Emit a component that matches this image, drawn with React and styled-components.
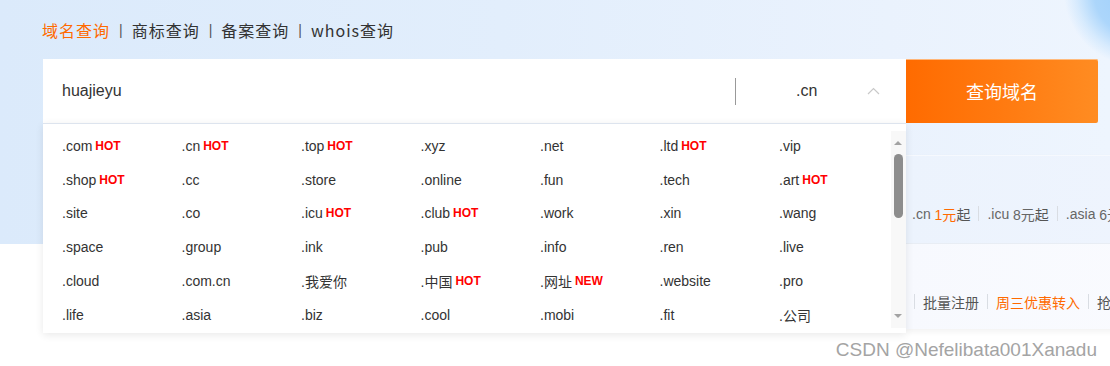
import React from "react";
import styled, { createGlobalStyle } from "styled-components";

const GlobalStyle = createGlobalStyle`
  html, body {
    margin: 0;
    padding: 0;
    overflow: hidden;
    background: #fff;
  }
  body {
    font-family: "Liberation Sans", Arial, "Noto Sans CJK SC", sans-serif;
  }
`;

const Page = styled.div`
  position: relative;
  width: 1110px;
  height: 366px;
  overflow: hidden;
  padding: 19px 0 0 43px;
  box-sizing: border-box;
  background-image:
    radial-gradient(circle at 1138px -8px, #9ccefa 0, #acd6fb 44px, rgba(200, 228, 253, 0.6) 62px, rgba(230, 241, 253, 0) 74px),
    linear-gradient(143deg, rgba(255, 255, 255, 0) 0, rgba(255, 255, 255, 0) 1010px, rgba(255, 255, 255, 0.7) 1013px, rgba(255, 255, 255, 0) 1016px),
    linear-gradient(90deg, #dbeafb 0%, #e2eefc 45%, #eaf2fd 80%, #eef5fe 100%);
  background-size: 100% 244px;
  background-repeat: no-repeat;
`;

const Tabs = styled.div`
  display: flex;
  align-items: center;
  height: 22px;
  margin: 0 0 18px -1px;
  font-family: "Noto Sans CJK SC", "Liberation Sans", sans-serif;
  font-size: 16px;
  line-height: 22px;
  letter-spacing: 1px;
  color: #333;
`;

const Tab = styled.span`
  color: ${(p) => (p.$active ? "#ff6a00" : "#333")};
  cursor: pointer;
`;

const TabSep = styled.span`
  font-family: "Liberation Sans", sans-serif;
  font-size: 14px;
  color: #555;
  margin: 0 9px;
  letter-spacing: 0;
`;

const SearchRow = styled.div`
  display: flex;
  height: 64px;
`;

const SearchWrap = styled.div`
  position: relative;
  width: 863px;
  z-index: 2;
`;

const SearchBox = styled.div`
  display: flex;
  align-items: center;
  height: 64px;
  background: #fff;
`;

const Input = styled.input`
  flex: 1;
  height: 100%;
  border: none;
  outline: none;
  padding: 0 0 0 19px;
  background: transparent;
  font-family: "Liberation Sans", Arial, sans-serif;
  font-size: 16px;
  color: #333;
`;

const Divider = styled.div`
  width: 1px;
  height: 27px;
  background: #999;
`;

const Selector = styled.div`
  width: 170px;
  box-sizing: border-box;
  display: flex;
  align-items: center;
  justify-content: space-between;
  padding: 0 26px 0 60px;
  font-size: 16px;
  color: #333;
`;

const SearchButton = styled.button`
  width: 192px;
  height: 64px;
  border: none;
  border-radius: 0 2px 2px 0;
  background: linear-gradient(90deg, #ff6b00 0%, #ff7a10 50%, #ff8c22 100%);
  box-shadow: inset 0 1px 0 rgba(255, 200, 150, 0.8);
  color: #fff;
  font-family: "Noto Sans CJK SC", sans-serif;
  font-size: 18px;
  cursor: pointer;
`;

const Dropdown = styled.div`
  position: absolute;
  top: 100%;
  left: 0;
  width: 863px;
  height: 210px;
  box-sizing: border-box;
  background: #fff;
  border-top: 1px solid #dde4ee;
  box-shadow: 0 2px 8px rgba(0, 0, 0, 0.09);
  overflow: hidden;
`;

const DomainGrid = styled.div`
  display: grid;
  grid-template-columns: repeat(7, 119.5px);
  grid-auto-rows: 33.8px;
  padding: 5px 0 0 19px;
`;

const Domain = styled.div`
  display: flex;
  align-items: center;
  font-size: 14px;
  color: #333;
  white-space: nowrap;
`;

const Tag = styled.span`
  margin-left: 3px;
  font-size: 12px;
  font-weight: bold;
  color: #f00;
`;

const ScrollTrack = styled.div`
  position: absolute;
  top: 7px;
  right: 0;
  width: 15px;
  height: 197px;
  background: #f8f8f8;
`;

const ScrollArrow = styled.div`
  position: absolute;
  left: 3px;
  width: 0;
  height: 0;
  border-left: 4px solid transparent;
  border-right: 4px solid transparent;
  ${(p) =>
    p.$down
      ? "bottom: 10px; border-top: 4px solid #a3a3a3;"
      : "top: 10px; border-bottom: 4px solid #a3a3a3;"}
`;

const ScrollThumb = styled.div`
  position: absolute;
  top: 23px;
  left: 3px;
  width: 9px;
  height: 64px;
  border-radius: 5px;
  background: #8d8d8d;
`;

const Panel = styled.div`
  margin: 32px 0 0 863px;
  width: 420px;
  box-shadow: 0 3px 6px rgba(0, 0, 0, 0.05);
`;

const Card = styled.div`
  display: flex;
  align-items: center;
  height: ${(p) => p.$h}px;
  box-sizing: border-box;
  padding: ${(p) => p.$pt}px 0 0 ${(p) => p.$pl}px;
  background: ${(p) => p.$bg};
  border-top: 1px solid ${(p) => p.$line};
  font-family: "Liberation Sans", Arial, "Noto Sans CJK SC", sans-serif;
  font-size: 14px;
  color: #666;
  white-space: nowrap;
`;

const Price = styled.span`
  color: ${(p) => (p.$hot ? "#ff6a00" : "#666")};
`;

const CardLink = styled.span`
  font-family: "Noto Sans CJK SC", sans-serif;
  color: ${(p) => (p.$hot ? "#ff6a00" : "#555")};
`;

const Sep = styled.span`
  display: inline-block;
  width: 1px;
  height: 15px;
  margin: 0 8px;
  background: #d9dde3;
`;

const Watermark = styled.div`
  position: absolute;
  right: 13px;
  bottom: 5px;
  font-family: "Liberation Sans", Arial, sans-serif;
  font-size: 19px;
  line-height: 22px;
  color: #a4a4a4;
  text-shadow: 0 0 1px rgba(255, 255, 255, 0.8);
`;

const domains = [
  [".com", "HOT"], [".cn", "HOT"], [".top", "HOT"], [".xyz"], [".net"], [".ltd", "HOT"], [".vip"],
  [".shop", "HOT"], [".cc"], [".store"], [".online"], [".fun"], [".tech"], [".art", "HOT"],
  [".site"], [".co"], [".icu", "HOT"], [".club", "HOT"], [".work"], [".xin"], [".wang"],
  [".space"], [".group"], [".ink"], [".pub"], [".info"], [".ren"], [".live"],
  [".cloud"], [".com.cn"], [".我爱你"], [".中国", "HOT"], [".网址", "NEW"], [".website"], [".pro"],
  [".life"], [".asia"], [".biz"], [".cool"], [".mobi"], [".fit"], [".公司"],
];

const ChevronUp = () => (
  <svg width="13" height="8" viewBox="0 0 13 8">
    <polyline points="1,7 6.5,1.5 12,7" fill="none" stroke="#c9c9c9" strokeWidth="1.2" />
  </svg>
);

const App = () => {
  return (
    <Page>
      <GlobalStyle />
      <Tabs>
        <Tab $active>域名查询</Tab>
        <TabSep>|</TabSep>
        <Tab>商标查询</Tab>
        <TabSep>|</TabSep>
        <Tab>备案查询</Tab>
        <TabSep>|</TabSep>
        <Tab>whois查询</Tab>
      </Tabs>
      <SearchRow>
        <SearchWrap>
          <SearchBox>
            <Input defaultValue="huajieyu" />
            <Divider />
            <Selector>
              <span>.cn</span>
              <ChevronUp />
            </Selector>
          </SearchBox>
          <Dropdown>
            <DomainGrid>
              {domains.map(([name, tag]) => (
                <Domain key={name}>
                  {name}
                  {tag && <Tag>{tag}</Tag>}
                </Domain>
              ))}
            </DomainGrid>
            <ScrollTrack>
              <ScrollArrow />
              <ScrollThumb />
              <ScrollArrow $down />
            </ScrollTrack>
          </Dropdown>
        </SearchWrap>
        <SearchButton>查询域名</SearchButton>
      </SearchRow>
      <Panel>
        <Card $h={88} $pt={28} $pl={6} $bg="linear-gradient(90deg, #ecf3fd, #f0f5fe)" $line="#f6f9fe">
          .cn&nbsp;<Price $hot>1元</Price><CardLink>起</CardLink>
          <Sep />
          .icu&nbsp;<Price>8元</Price><CardLink>起</CardLink>
          <Sep />
          .asia&nbsp;<Price>6元</Price><CardLink>起</CardLink>
        </Card>
        <Card $h={86} $pt={30} $pl={0} $bg="linear-gradient(90deg, #f7f9fe, #fbfcff)" $line="#e8edf4">
          <Sep />
          <CardLink>批量注册</CardLink>
          <Sep />
          <CardLink $hot>周三优惠转入</CardLink>
          <Sep />
          <CardLink>抢注域名</CardLink>
        </Card>
      </Panel>
      <Watermark>CSDN @Nefelibata001Xanadu</Watermark>
    </Page>
  );
};

export default App;
